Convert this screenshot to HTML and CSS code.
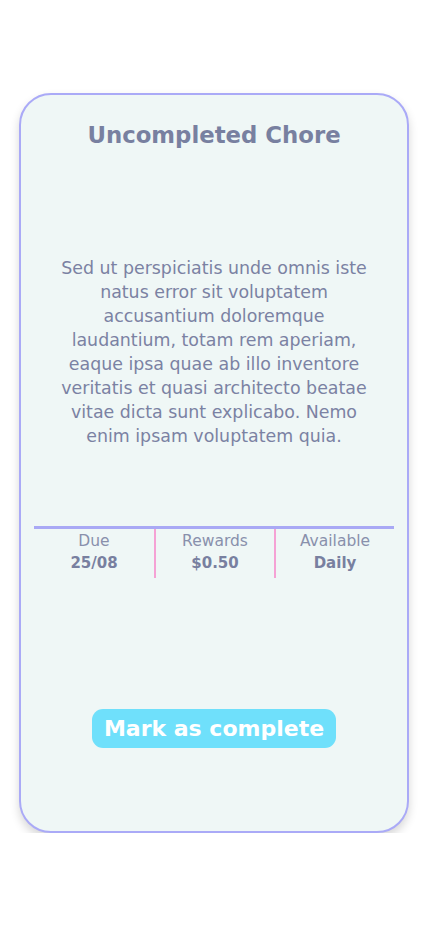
FILE: index.html
```html
<!DOCTYPE html>
<html lang="en">
<head>
<meta charset="utf-8">
<title>Uncompleted Chore</title>
<link rel="stylesheet" href="styles.css">
</head>
<body>
<div class="card">
  <h1 class="title">Uncompleted Chore</h1>
  <p class="desc">Sed ut perspiciatis unde omnis iste natus error sit voluptatem accusantium doloremque laudantium, totam rem aperiam, eaque ipsa quae ab illo inventore veritatis et quasi architecto beatae vitae dicta sunt explicabo. Nemo enim ipsam voluptatem quia.</p>
  <div class="stats">
    <div class="stat">
      <span class="label">Due</span>
      <span class="value">25/08</span>
    </div>
    <div class="stat">
      <span class="label">Rewards</span>
      <span class="value">$0.50</span>
    </div>
    <div class="stat">
      <span class="label">Available</span>
      <span class="value">Daily</span>
    </div>
  </div>
  <button class="complete">Mark as complete</button>
</div>
</body>
</html>
```
FILE: styles.css
```css
html, body {
  margin: 0;
  padding: 0;
  background: #ffffff;
}
body {
  font-family: "DejaVu Sans", "Open Sans", sans-serif;
  padding: 93px 19px 0 19px;
}
.card {
  box-sizing: border-box;
  width: 390px;
  height: 740px;
  background: #eff7f6;
  border: 2px solid #aaaaf7;
  border-radius: 32px;
  box-shadow: 0 5px 10px rgba(0, 0, 0, 0.16);
  display: flex;
  flex-direction: column;
  align-items: center;
  padding-top: 26px;
}
.title {
  margin: 0;
  font-size: 22.8px;
  line-height: 28px;
  font-weight: 700;
  color: #7880a0;
}
.desc {
  margin: 107px 0 0 0;
  width: 326px;
  font-size: 17.4px;
  line-height: 24px;
  text-align: center;
  color: #7b82a3;
}
.stats {
  margin-top: 78px;
  width: 360px;
  border-top: 3px solid #a9a9f5;
  display: grid;
  grid-template-columns: 1fr 1fr 1fr;
}
.stat {
  display: flex;
  flex-direction: column;
  align-items: center;
  height: 48px;
  padding-top: 1px;
  color: #7880a0;
}
.stat + .stat {
  border-left: 2px solid #f5a2d5;
}
.label {
  font-size: 15.5px;
  line-height: 22px;
  font-weight: 400;
  color: #8990ac;
}
.value {
  font-size: 15px;
  line-height: 22px;
  font-weight: 700;
}
.complete {
  margin-top: 131px;
  width: 244px;
  height: 39px;
  border: none;
  border-radius: 11px;
  background: #6fe0fb;
  color: #ffffff;
  font-family: inherit;
  font-size: 22px;
  font-weight: 700;
  padding: 0;
}
```
